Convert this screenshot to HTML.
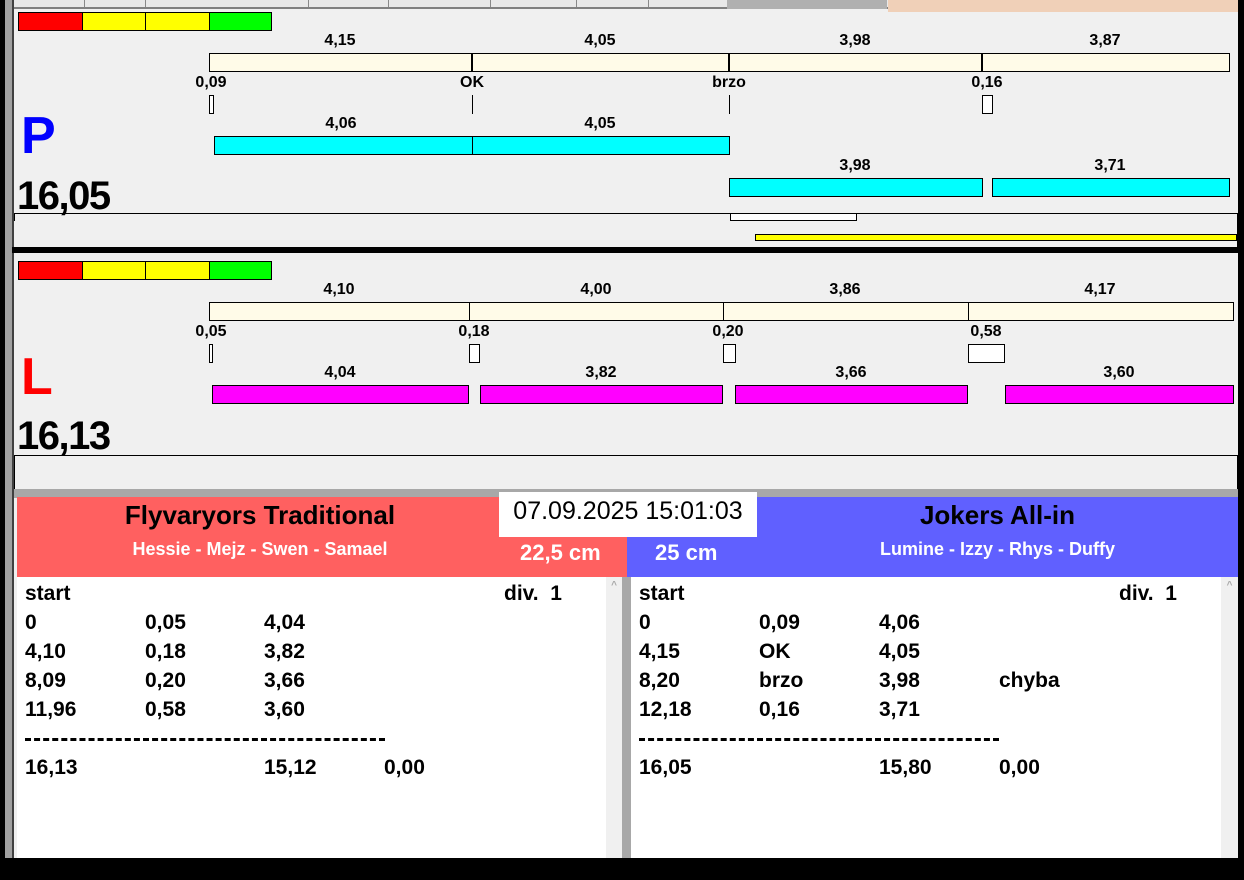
<!DOCTYPE html>
<html><head><meta charset="utf-8"><style>
*{margin:0;padding:0;box-sizing:border-box}
body{width:1244px;height:880px;background:#f0f0f0;position:relative;overflow:hidden;font-family:"Liberation Sans",Arial,sans-serif;font-weight:bold;color:#000}
div{position:absolute}
.b{border:1px solid #000}
.t{font-size:16px;transform:translateX(-50%);white-space:nowrap;line-height:18px}
.cr{background:#fffbe8}
.cy{background:#00ffff}
.mg{background:#ff00ff}
.w{background:#fff}
.r{font-size:21px;line-height:24px;white-space:nowrap}
</style></head><body>
<div style="left:0;top:0;width:5px;height:880px;background:#000"></div>
<div style="left:5px;top:0;width:7px;height:880px;background:#a0a0a0"></div>
<div style="left:12px;top:0;width:2px;height:860px;background:#404040"></div>
<div style="left:1238px;top:0;width:6px;height:880px;background:#000"></div>
<div style="left:0;top:858px;width:1244px;height:22px;background:#000"></div>
<div style="left:14px;top:0;width:874px;height:9px;background:#e8e8e8;border-bottom:2px solid #808080"></div>
<div style="left:84px;top:0;width:1px;height:7px;background:#888"></div>
<div style="left:145px;top:0;width:1px;height:7px;background:#888"></div>
<div style="left:308px;top:0;width:1px;height:7px;background:#888"></div>
<div style="left:388px;top:0;width:1px;height:7px;background:#888"></div>
<div style="left:490px;top:0;width:1px;height:7px;background:#888"></div>
<div style="left:576px;top:0;width:1px;height:7px;background:#888"></div>
<div style="left:648px;top:0;width:1px;height:7px;background:#888"></div>
<div style="left:727px;top:0;width:160px;height:9px;background:#b0b0b0"></div>
<div style="left:888px;top:0;width:350px;height:12px;background:#f0d0b8"></div>

<div class="b" style="left:18px;top:12px;width:65px;height:19px;background:#f00"></div>
<div class="b" style="left:82px;top:12px;width:64px;height:19px;background:#ff0"></div>
<div class="b" style="left:145px;top:12px;width:65px;height:19px;background:#ff0"></div>
<div class="b" style="left:209px;top:12px;width:63px;height:19px;background:#0f0"></div>

<div class="t" style="left:340px;top:32px">4,15</div>
<div class="t" style="left:600px;top:32px">4,05</div>
<div class="t" style="left:855px;top:32px">3,98</div>
<div class="t" style="left:1105px;top:32px">3,87</div>
<div class="b cr" style="left:209px;top:53px;width:1021px;height:19px"></div>
<div style="left:471px;top:53px;width:2px;height:19px;background:#000"></div>
<div style="left:728px;top:53px;width:2px;height:19px;background:#000"></div>
<div style="left:981px;top:53px;width:2px;height:19px;background:#000"></div>
<div class="t" style="left:211px;top:74px">0,09</div>
<div class="t" style="left:472px;top:74px">OK</div>
<div class="t" style="left:729px;top:74px">brzo</div>
<div class="t" style="left:987px;top:74px">0,16</div>
<div class="b w" style="left:209px;top:95px;width:5px;height:19px"></div>
<div style="left:472px;top:95px;width:1px;height:19px;background:#000"></div>
<div style="left:729px;top:95px;width:1px;height:19px;background:#000"></div>
<div class="b w" style="left:982px;top:95px;width:11px;height:19px"></div>

<div style="left:21px;top:108px;font-size:52px;line-height:56px;color:#0000ff">P</div>
<div class="t" style="left:341px;top:115px">4,06</div>
<div class="t" style="left:600px;top:115px">4,05</div>
<div class="b cy" style="left:214px;top:136px;width:516px;height:19px"></div>
<div style="left:472px;top:136px;width:1px;height:19px;background:#000"></div>
<div class="t" style="left:855px;top:157px">3,98</div>
<div class="t" style="left:1110px;top:157px">3,71</div>
<div class="b cy" style="left:729px;top:178px;width:254px;height:19px"></div>
<div class="b cy" style="left:992px;top:178px;width:238px;height:19px"></div>
<div style="left:17px;top:173px;font-size:40px;line-height:46px;letter-spacing:-1.5px">16,05</div>
<div style="left:14px;top:213px;width:1224px;height:34px;border-top:1px solid #000;border-right:1px solid #000"></div>
<div style="left:14px;top:213px;width:1px;height:8px;background:#000"></div>
<div class="b w" style="left:730px;top:213px;width:127px;height:8px"></div>
<div class="b" style="left:755px;top:234px;width:482px;height:7px;background:#ff0"></div>
<div style="left:12px;top:247px;width:1226px;height:6px;background:#000"></div>

<div class="b" style="left:18px;top:261px;width:65px;height:19px;background:#f00"></div>
<div class="b" style="left:82px;top:261px;width:64px;height:19px;background:#ff0"></div>
<div class="b" style="left:145px;top:261px;width:65px;height:19px;background:#ff0"></div>
<div class="b" style="left:209px;top:261px;width:63px;height:19px;background:#0f0"></div>
<div class="t" style="left:339px;top:281px">4,10</div>
<div class="t" style="left:596px;top:281px">4,00</div>
<div class="t" style="left:845px;top:281px">3,86</div>
<div class="t" style="left:1100px;top:281px">4,17</div>
<div class="b cr" style="left:209px;top:302px;width:1025px;height:19px"></div>
<div style="left:469px;top:302px;width:1px;height:19px;background:#000"></div>
<div style="left:723px;top:302px;width:1px;height:19px;background:#000"></div>
<div style="left:968px;top:302px;width:1px;height:19px;background:#000"></div>
<div class="t" style="left:211px;top:323px">0,05</div>
<div class="t" style="left:474px;top:323px">0,18</div>
<div class="t" style="left:728px;top:323px">0,20</div>
<div class="t" style="left:986px;top:323px">0,58</div>
<div class="b w" style="left:209px;top:344px;width:4px;height:19px"></div>
<div class="b w" style="left:469px;top:344px;width:11px;height:19px"></div>
<div class="b w" style="left:723px;top:344px;width:13px;height:19px"></div>
<div class="b w" style="left:968px;top:344px;width:37px;height:19px"></div>
<div style="left:21px;top:349px;font-size:52px;line-height:56px;color:#ff0000">L</div>
<div class="t" style="left:340px;top:364px">4,04</div>
<div class="t" style="left:601px;top:364px">3,82</div>
<div class="t" style="left:851px;top:364px">3,66</div>
<div class="t" style="left:1119px;top:364px">3,60</div>
<div class="b mg" style="left:212px;top:385px;width:257px;height:19px"></div>
<div class="b mg" style="left:480px;top:385px;width:243px;height:19px"></div>
<div class="b mg" style="left:735px;top:385px;width:233px;height:19px"></div>
<div class="b mg" style="left:1005px;top:385px;width:229px;height:19px"></div>
<div style="left:17px;top:413px;font-size:40px;line-height:46px;letter-spacing:-1.5px">16,13</div>
<div style="left:14px;top:455px;width:1224px;height:35px;border-top:1px solid #000;border-right:1px solid #000;border-left:1px solid #000"></div>

<div style="left:14px;top:489px;width:1224px;height:9px;background:#a8a8a8"></div>
<div style="left:17px;top:497px;width:610px;height:80px;background:#ff6060"></div>
<div style="left:627px;top:497px;width:611px;height:80px;background:#6060ff"></div>
<div style="left:17px;top:500px;width:486px;text-align:center;font-size:26px;line-height:30px">Flyvaryors Traditional</div>
<div style="left:17px;top:538px;width:486px;text-align:center;font-size:18px;line-height:22px;color:#fff">Hessie - Mejz - Swen - Samael</div>
<div style="left:757px;top:500px;width:481px;text-align:center;font-size:26px;line-height:30px">Jokers All-in</div>
<div style="left:757px;top:538px;width:481px;text-align:center;font-size:18px;line-height:22px;color:#fff">Lumine - Izzy - Rhys - Duffy</div>
<div style="left:499px;top:492px;width:258px;height:45px;background:#fff;font-weight:normal;font-size:25px;line-height:38px;text-align:center">07.09.2025 15:01:03</div>
<div style="left:520px;top:540px;font-size:22px;line-height:26px;color:#fff">22,5 cm</div>
<div style="left:655px;top:540px;font-size:22px;line-height:26px;color:#fff">25 cm</div>

<div style="left:17px;top:577px;width:590px;height:281px;background:#fff"></div>
<div style="left:606px;top:577px;width:16px;height:281px;background:#f0f0f0;font-size:10px;color:#aaa;text-align:center;line-height:18px">^</div>
<div style="left:622px;top:577px;width:9px;height:281px;background:#a8a8a8"></div>
<div style="left:631px;top:577px;width:590px;height:281px;background:#fff"></div>
<div style="left:1221px;top:577px;width:17px;height:281px;background:#f0f0f0;font-size:10px;color:#aaa;text-align:center;line-height:18px">^</div>

<div class="r" style="left:25px;top:582px">start</div><div class="r" style="left:504px;top:582px">div.&nbsp; 1</div>
<div class="r" style="left:25px;top:611px">0</div><div class="r" style="left:145px;top:611px">0,05</div><div class="r" style="left:264px;top:611px">4,04</div>
<div class="r" style="left:25px;top:640px">4,10</div><div class="r" style="left:145px;top:640px">0,18</div><div class="r" style="left:264px;top:640px">3,82</div>
<div class="r" style="left:25px;top:669px">8,09</div><div class="r" style="left:145px;top:669px">0,20</div><div class="r" style="left:264px;top:669px">3,66</div>
<div class="r" style="left:25px;top:698px">11,96</div><div class="r" style="left:145px;top:698px">0,58</div><div class="r" style="left:264px;top:698px">3,60</div>
<div style="left:25px;top:738px;width:360px;height:3px;border-top:3px dashed #000"></div>
<div class="r" style="left:25px;top:756px">16,13</div><div class="r" style="left:264px;top:756px">15,12</div><div class="r" style="left:384px;top:756px">0,00</div>

<div class="r" style="left:639px;top:582px">start</div><div class="r" style="left:1119px;top:582px">div.&nbsp; 1</div>
<div class="r" style="left:639px;top:611px">0</div><div class="r" style="left:759px;top:611px">0,09</div><div class="r" style="left:879px;top:611px">4,06</div>
<div class="r" style="left:639px;top:640px">4,15</div><div class="r" style="left:759px;top:640px">OK</div><div class="r" style="left:879px;top:640px">4,05</div>
<div class="r" style="left:639px;top:669px">8,20</div><div class="r" style="left:759px;top:669px">brzo</div><div class="r" style="left:879px;top:669px">3,98</div><div class="r" style="left:999px;top:669px">chyba</div>
<div class="r" style="left:639px;top:698px">12,18</div><div class="r" style="left:759px;top:698px">0,16</div><div class="r" style="left:879px;top:698px">3,71</div>
<div style="left:639px;top:738px;width:360px;height:3px;border-top:3px dashed #000"></div>
<div class="r" style="left:639px;top:756px">16,05</div><div class="r" style="left:879px;top:756px">15,80</div><div class="r" style="left:999px;top:756px">0,00</div>
</body></html>
